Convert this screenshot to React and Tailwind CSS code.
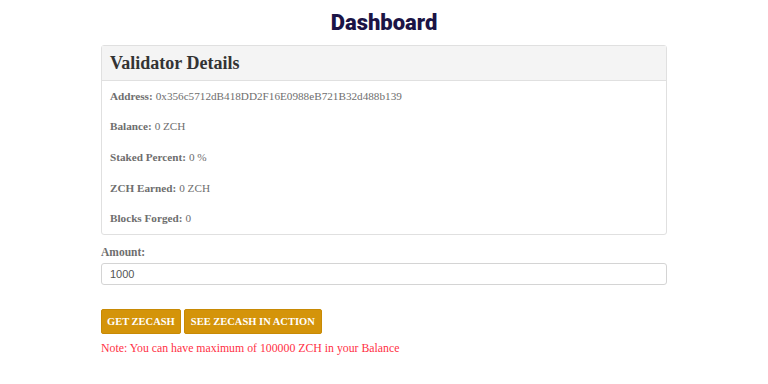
export default function App() {
  const rows = [
    ["Address:", "0x356c5712dB418DD2F16E0988eB721B32d488b139"],
    ["Balance:", "0 ZCH"],
    ["Staked Percent:", "0 %"],
    ["ZCH Earned:", "0 ZCH"],
    ["Blocks Forged:", "0"],
  ];
  const serif = { fontFamily: '"Liberation Serif", "DejaVu Serif", serif' };
  return (
    <div className="w-[768px] h-[384px] bg-white overflow-hidden" style={serif}>
      <h1
        className="text-center text-[22px] leading-none text-[#1b1446] pt-[12px] h-[45px]"
        style={{ fontFamily: 'Roboto, Inter, sans-serif', fontWeight: 900 }}
      >
        Dashboard
      </h1>
      <div className="mx-[101px]">
        <div className="border border-[#e0e0e0] rounded-[3px]">
          <div className="bg-[#f4f4f4] border-b border-[#e0e0e0] h-[35px] flex items-center px-[8px]">
            <span className="text-[18px] font-bold text-[#333]">Validator Details</span>
          </div>
          <div className="px-[8px] flex flex-col">
            {rows.map(([k, v]) => (
              <div key={k} className="h-[30.6px] flex items-center text-[11.2px] text-[#6e6e6e]">
                <span className="font-bold mr-[3px]">{k}</span>
                <span>{v}</span>
              </div>
            ))}
          </div>
        </div>
        <div className="mt-[9px] text-[11.5px] font-bold text-[#6e6e6e] h-[18px] flex items-center">Amount:</div>
        <div className="mt-[1px] h-[22px] border border-[#d4d4d4] rounded-[3px] flex items-center px-[8px] text-[11px] text-[#555]" style={{ fontFamily: '"Liberation Sans", Arial, sans-serif' }}>
          1000
        </div>
        <div className="mt-[24px] flex gap-[3px]">
          <div className="h-[25px] px-[5px] bg-[#d4940a] border border-[#c88a05] rounded-[2px] flex items-center text-white text-[10.5px] font-bold">
            GET ZECASH
          </div>
          <div className="h-[25px] px-[6px] bg-[#d4940a] border border-[#c88a05] rounded-[2px] flex items-center text-white text-[10.5px] font-bold">
            SEE ZECASH IN ACTION
          </div>
        </div>
        <div className="mt-[6px] h-[18px] flex items-center text-[11.8px] text-[#ff3045]">Note: You can have maximum of 100000 ZCH in your Balance</div>
      </div>
    </div>
  );
}
